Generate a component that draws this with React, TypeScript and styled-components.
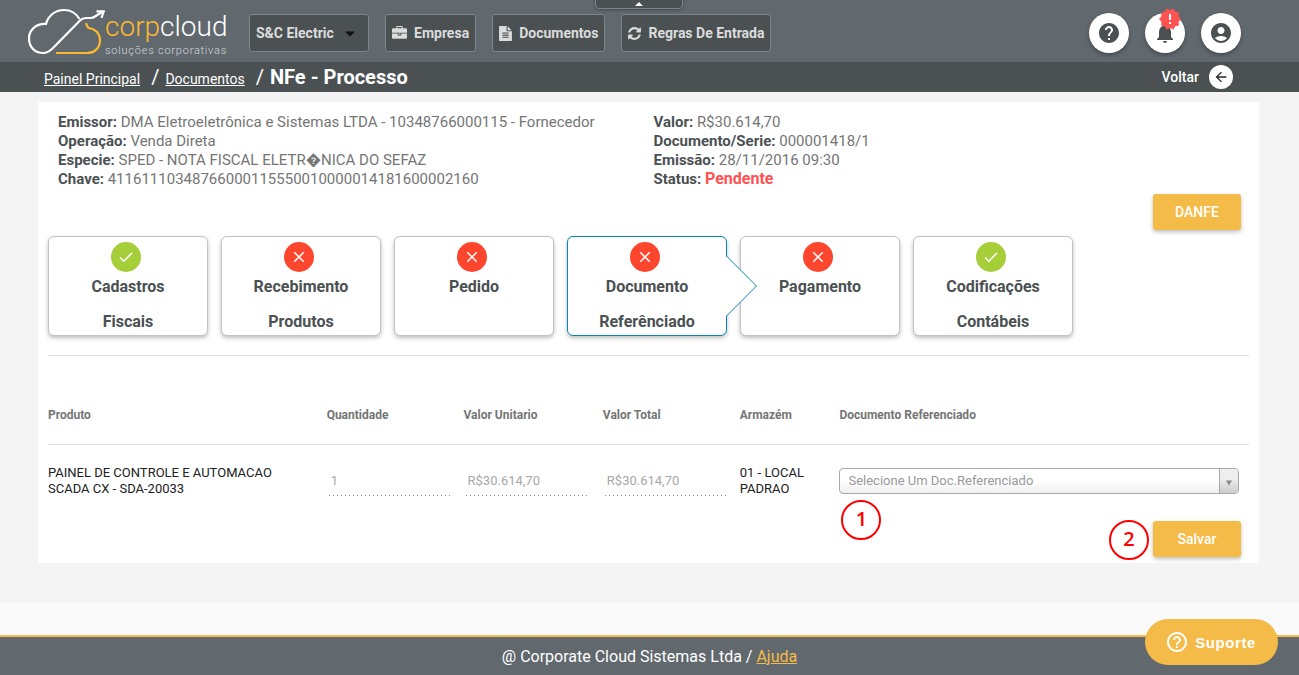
import React from "react";
import styled, { createGlobalStyle } from "styled-components";
import {
  MdAccountCircle,
  MdArrowBack,
  MdCheck,
  MdClose,
  MdHelp,
  MdHelpOutline,
  MdNewReleases,
  MdNotifications,
} from "react-icons/md";

const colors = {
  slate: "#61686e",
  dark: "#4b5153",
  amber: "#f4bb48",
  logo: "#fdb92f",
  text: "#757575",
  strong: "#4b5153",
  ok: "#a6ce39",
  error: "#fc462e",
  active: "#0a84b5",
};

const GlobalStyle = createGlobalStyle`
  *, *::before, *::after { box-sizing: border-box; }
  body {
    margin: 0;
    background: #fafafa;
    font-family: Roboto, "DejaVu Sans", sans-serif;
    font-size: 15px;
    color: ${colors.text};
  }
  button, select, input { font-family: inherit; }
`;

const Header = styled.header`
  position: relative;
  display: flex;
  align-items: center;
  height: 62px;
  padding: 4px 58px 0 28px;
  background: ${colors.slate};
`;

const Logo = styled.a`
  display: flex;
  align-items: flex-start;
  width: 221px;
  height: 50px;
  color: #fff;
  text-decoration: none;
`;

const LogoText = styled.span`
  display: flex;
  flex-direction: column;
  font-weight: 300;
  white-space: nowrap;
`;

const LogoName = styled.span`
  font-size: 28px;
  line-height: 38px;
  em {
    font-style: normal;
    color: ${colors.logo};
  }
`;

const LogoTag = styled.span`
  font-size: 11px;
  line-height: 10px;
  letter-spacing: 0.07em;
  color: #d5d8da;
`;

const Menu = styled.nav`
  display: flex;
  flex: 1;
  gap: 16px;
`;

const MenuButton = styled.button`
  display: flex;
  align-items: center;
  gap: 7px;
  height: 38px;
  padding: 0 6px;
  border: 1px solid #7f868b;
  border-radius: 3px;
  background: ${colors.dark};
  color: #dcdcdc;
  font-size: 14px;
  font-weight: 700;
  white-space: nowrap;
`;

const CompanyPicker = styled.div`
  position: relative;
  width: 120px;
`;

const CompanySelect = styled.select`
  appearance: none;
  width: 100%;
  height: 38px;
  padding: 0 6px;
  border: 1px solid #7f868b;
  border-radius: 3px;
  background: ${colors.dark};
  color: #dcdcdc;
  font-size: 14px;
  font-weight: 700;
`;

const Caret = styled.svg`
  position: absolute;
  right: 14px;
  top: 17px;
  pointer-events: none;
`;

const CollapseTab = styled.button`
  position: absolute;
  top: -4px;
  left: calc(50% - 55px);
  display: flex;
  align-items: flex-end;
  justify-content: center;
  width: 88px;
  height: 13px;
  padding: 0 0 2px;
  border: 1px solid #7f868b;
  border-radius: 4px;
  background: ${colors.dark};
  box-shadow: 0 1px 3px rgba(0, 0, 0, 0.3);
`;

const Actions = styled.div`
  display: flex;
  gap: 16px;
`;

const RoundButton = styled.button`
  position: relative;
  display: grid;
  place-items: center;
  width: 40px;
  height: 40px;
  padding: 0;
  border: 0;
  border-radius: 50%;
  background: #fff;
  color: ${colors.dark};
  box-shadow: 0 2px 4px rgba(0, 0, 0, 0.3);
`;

const Alert = styled.span`
  position: absolute;
  top: -6px;
  left: 13px;
  display: flex;
  color: #ff5252;
  background: radial-gradient(circle, #fff 7px, transparent 8px);
`;

const Crumbs = styled.div`
  display: flex;
  align-items: center;
  justify-content: space-between;
  height: 30px;
  padding: 0 66px 0 44px;
  background: ${colors.dark};
  color: #fff;
`;

const Trail = styled.nav`
  display: flex;
  align-items: baseline;
  font-size: 20px;
  a {
    color: #fff;
    font-size: 14px;
  }
  span {
    margin: 0 6px 0 11px;
  }
`;

const PageTitle = styled.h1`
  margin: 0;
  font-size: 20px;
  font-weight: 700;
`;

const BackLink = styled.a`
  display: flex;
  align-items: center;
  gap: 10px;
  color: #fff;
  font-size: 14px;
  font-weight: 500;
  text-decoration: none;
`;

const BackIcon = styled.span`
  display: grid;
  place-items: center;
  width: 24px;
  height: 24px;
  border-radius: 50%;
  background: #fff;
  color: #222;
`;

const Main = styled.main`
  padding: 10px 40px 40px 38px;
  background: #f4f4f4;
`;

const Card = styled.section`
  padding: 11px 10px 6px;
  background: #fff;
`;

const Info = styled.div`
  display: grid;
  grid-template-columns: 1fr 1fr;
  padding-left: 10px;
  line-height: 19px;
  p {
    margin: 0;
  }
  b {
    color: ${colors.strong};
  }
`;

const Status = styled.strong`
  font-size: 16px;
  line-height: 16px;
  color: #ff5252;
`;

const ButtonRow = styled.div<{ $top: number; $bottom: number }>`
  display: flex;
  justify-content: flex-end;
  padding: ${(p) => p.$top}px 8px ${(p) => p.$bottom}px;
`;

const ButtonHolder = styled.div`
  position: relative;
`;

const PrimaryButton = styled.button`
  width: 88px;
  height: 36px;
  padding: 0;
  border: 0;
  border-radius: 3px;
  background: ${colors.amber};
  color: #fff;
  font-size: 14px;
  font-weight: 500;
  box-shadow: 0 2px 4px rgba(0, 0, 0, 0.26);
`;

const Steps = styled.div`
  display: flex;
  gap: 13px;
  padding-bottom: 19px;
  border-bottom: 1px solid #e0e0e0;
`;

const StepCard = styled.button<{ $active?: boolean }>`
  position: relative;
  display: flex;
  flex-direction: column;
  align-items: center;
  justify-content: flex-start;
  width: 160px;
  height: 100px;
  padding: 5px 0 0;
  border: 1px solid ${(p) => (p.$active ? colors.active : "#c3c3c3")};
  border-radius: 6px;
  background: #fff;
  color: ${colors.strong};
  font-size: 16px;
  font-weight: 700;
  line-height: 35px;
  box-shadow: 0 2px 4px rgba(0, 0, 0, 0.26);
  z-index: ${(p) => (p.$active ? 1 : 0)};
`;

const StepBadge = styled.span<{ $ok: boolean }>`
  display: grid;
  flex-shrink: 0;
  place-items: center;
  width: 30px;
  height: 30px;
  margin: 0 4px -3px 0;
  border-radius: 50%;
  background: ${(p) => (p.$ok ? colors.ok : colors.error)};
  color: #fff;
`;

const Pointer = styled.svg`
  position: absolute;
  left: 157px;
  top: 18px;
`;

const Table = styled.table`
  width: 100%;
  margin-top: 31px;
  border-collapse: collapse;
  table-layout: fixed;
  th {
    height: 57px;
    padding: 0;
    font-size: 12px;
    font-weight: 700;
    text-align: left;
  }
  thead tr {
    border-bottom: 1px solid #e0e0e0;
  }
  td {
    position: relative;
    height: 73px;
    padding: 0;
    color: #212121;
    font-size: 13px;
    line-height: 16px;
  }
`;

const Col = styled.col<{ $w: string }>`
  width: ${(p) => p.$w};
`;

const DottedInput = styled.input`
  display: block;
  width: calc(100% - 15px);
  height: 30px;
  margin: 0 2px;
  padding: 2px;
  border: 0;
  background: repeating-linear-gradient(90deg, #8c8c8c 0 1px, transparent 1px 4px) bottom / 100% 1px no-repeat;
  color: #a8a8a8;
  font-size: 13px;
`;

const ReferenceBox = styled.div`
  position: relative;
  width: calc(100% - 10px);
`;

const ReferenceSelect = styled.select`
  appearance: none;
  display: block;
  width: 100%;
  height: 26px;
  padding: 0 26px 0 8px;
  border: 1px solid #aaa;
  border-radius: 4px;
  background: linear-gradient(#fff 50%, #eee);
  color: #999;
  font-size: 13px;
`;

const ReferenceArrow = styled.span`
  position: absolute;
  top: 1px;
  right: 1px;
  display: grid;
  place-items: center;
  width: 19px;
  height: 24px;
  padding-top: 4px;
  border-left: 1px solid #aaa;
  border-radius: 0 3px 3px 0;
  background: linear-gradient(#eee 40%, #ccc);
  pointer-events: none;
`;

const Marker = styled.span<{ $x: number; $y: number }>`
  position: absolute;
  left: ${(p) => p.$x}px;
  top: ${(p) => p.$y}px;
  width: 40px;
  height: 40px;
  border: 2px solid #f00;
  border-radius: 50%;
  color: #f00;
  font-family: "Open Sans", sans-serif;
  font-size: 20px;
  font-weight: 600;
  line-height: 34px;
  text-align: center;
`;

const Footer = styled.footer`
  margin-top: 32px;
  padding-top: 2px;
  border-top: 2px solid ${colors.amber};
  background: ${colors.slate};
  color: #fff;
  font-size: 16px;
  line-height: 36px;
  text-align: center;
  a {
    color: ${colors.amber};
  }
`;

const Support = styled.button`
  position: fixed;
  right: 21px;
  bottom: 10px;
  display: flex;
  align-items: center;
  gap: 6px;
  height: 46px;
  padding: 0 22px 0 20px;
  border: 0;
  border-radius: 23px;
  background: ${colors.amber};
  color: #fff;
  && {
    font-family: "Liberation Sans", sans-serif;
  }
  font-size: 15px;
  font-weight: 700;
  letter-spacing: 0.04em;
`;

const BRIEFCASE =
  "M640 256h512v-128h-512v128zm1152 640v480q0 66-47 113t-113 47h-1472q-66 0-113-47t-47-113v-480h672v160q0 26 19 45t45 19h320q26 0 45-19t19-45v-160h672zm-768 0v128h-256v-128h256zm768-480v384h-1792v-384q0-66 47-113t113-47h352v-160q0-40 28-68t68-28h576q40 0 68 28t28 68v160h352q66 0 113 47t47 113z";
const FILE =
  "M1596 476q14 14 28 36h-472v-472q22 14 36 28zm-476 164h544v1056q0 40-28 68t-68 28h-1344q-40 0-68-28t-28-68v-1600q0-40 28-68t68-28h800v544q0 40 28 68t68 28zm160 736v-64q0-14-9-23t-23-9h-704q-14 0-23 9t-9 23v64q0 14 9 23t23 9h704q14 0 23-9t9-23zm0-256v-64q0-14-9-23t-23-9h-704q-14 0-23 9t-9 23v64q0 14 9 23t23 9h704q14 0 23-9t9-23zm0-256v-64q0-14-9-23t-23-9h-704q-14 0-23 9t-9 23v64q0 14 9 23t23 9h704q14 0 23-9t9-23z";
const REFRESH =
  "M1639 1056q0 5-1 7-64 268-268 434.5t-478 166.5q-146 0-282.5-55t-243.5-157l-129 129q-19 19-45 19t-45-19-19-45v-448q0-26 19-45t45-19h448q26 0 45 19t19 45-19 45l-137 137q71 66 161 102t187 36q134 0 250-65t186-179q11-17 53-117 8-23 30-23h192q13 0 22.5 9.5t9.5 22.5zm25-800v448q0 26-19 45t-45 19h-448q-26 0-45-19t-19-45 19-45l138-138q-148-137-349-137-134 0-250 65t-186 179q-11 17-53 117-8 23-30 23h-199q-13 0-22.5-9.5t-9.5-22.5v-7q65-268 270-434.5t480-166.5q146 0 284 55.5t245 156.5l130-129q19-19 45-19t45 19 19 45z";

const MENU = [
  { label: "Empresa", path: BRIEFCASE, box: "0 0 1792 1792", width: 15 },
  { label: "Documentos", path: FILE, box: "128 0 1536 1792", width: 13 },
  { label: "Regras De Entrada", path: REFRESH, box: "128 0 1536 1792", width: 13 },
];

const STEPS = [
  { lines: ["Cadastros", "Fiscais"], ok: true },
  { lines: ["Recebimento", "Produtos"], ok: false },
  { lines: ["Pedido"], ok: false },
  { lines: ["Documento", "Referênciado"], ok: false, active: true },
  { lines: ["Pagamento"], ok: false },
  { lines: ["Codificações", "Contábeis"], ok: true },
];

export default function App() {
  return (
    <>
      <GlobalStyle />
      <Header>
        <Logo href="#inicio">
          <svg width="77" height="48" viewBox="28 8 77 48" fill="none" strokeWidth="2.2">
            <path
              stroke="#fff"
              d="M79.5 19C76 13 70.5 10 64 10C55 10 48 16 46 24C36 23.500 29 30 29 38.500C29 47 35 53 43 53C47 53 50 51 52.500 48.500L80 20.500Q82.500 18 86 18H90Q93 18 95 16.500L102 12"
            />
            <path stroke="#fff" d="M96.500 11.300L103.700 11.300L101.500 17.800" />
            <path
              stroke={colors.logo}
              d="M56 53H87C95 53 100 47.500 100 40.500C100 33.500 95 28.500 88.500 28C87.500 27 86.500 25.500 86 23"
            />
          </svg>
          <LogoText>
            <LogoName>
              <em>corp</em>cloud
            </LogoName>
            <LogoTag>soluções corporativas</LogoTag>
          </LogoText>
        </Logo>
        <Menu aria-label="Menu principal">
          <CompanyPicker>
            <CompanySelect aria-label="Empresa atual" defaultValue="sc">
              <option value="sc">S&amp;C Electric</option>
            </CompanySelect>
            <Caret width="10" height="6" viewBox="0 0 10 6" aria-hidden="true">
              <path d="M0 0.500H10L5 5.500Z" fill="#111" />
            </Caret>
          </CompanyPicker>
          {MENU.map((item) => (
            <MenuButton key={item.label} type="button">
              <svg width={item.width} height="15" viewBox={item.box} aria-hidden="true">
                <path d={item.path} fill="currentColor" />
              </svg>
              {item.label}
            </MenuButton>
          ))}
        </Menu>
        <Actions>
          <RoundButton type="button" aria-label="Dúvidas">
            <MdHelp size={24} />
          </RoundButton>
          <RoundButton type="button" aria-label="Notificações">
            <MdNotifications size={24} />
            <Alert>
              <MdNewReleases size={24} />
            </Alert>
          </RoundButton>
          <RoundButton type="button" aria-label="Conta">
            <MdAccountCircle size={24} />
          </RoundButton>
        </Actions>
        <CollapseTab type="button" aria-label="Recolher">
          <svg width="8" height="4" viewBox="0 0 8 4">
            <path d="M0 4L4 0L8 4Z" fill="#fff" />
          </svg>
        </CollapseTab>
      </Header>

      <Crumbs>
        <Trail aria-label="Trilha">
          <a href="#painel">Painel Principal</a>
          <span>/</span>
          <a href="#documentos">Documentos</a>
          <span>/</span>
          <PageTitle>NFe - Processo</PageTitle>
        </Trail>
        <BackLink href="#voltar">
          Voltar
          <BackIcon>
            <MdArrowBack size={16} />
          </BackIcon>
        </BackLink>
      </Crumbs>

      <Main>
        <Card>
          <Info>
            <div>
              <p><b>Emissor:</b> DMA Eletroeletrônica e Sistemas LTDA - 10348766000115 - Fornecedor</p>
              <p><b>Operação:</b> Venda Direta</p>
              <p><b>Especie:</b> SPED - NOTA FISCAL ELETR{"\uFFFD"}NICA DO SEFAZ</p>
              <p><b>Chave:</b> 41161110348766000115550010000014181600002160</p>
            </div>
            <div>
              <p><b>Valor:</b> R$30.614,70</p>
              <p><b>Documento/Serie:</b> 000001418/1</p>
              <p><b>Emissão:</b> 28/11/2016 09:30</p>
              <p><b>Status:</b> <Status>Pendente</Status></p>
            </div>
          </Info>
          <ButtonRow $top={5} $bottom={6}>
            <PrimaryButton type="button">DANFE</PrimaryButton>
          </ButtonRow>
          <Steps>
            {STEPS.map((step) => (
              <StepCard key={step.lines[0]} type="button" $active={step.active}>
                <StepBadge $ok={step.ok}>
                  {step.ok ? <MdCheck size={18} /> : <MdClose size={18} />}
                </StepBadge>
                {step.lines.map((line) => (
                  <span key={line}>{line}</span>
                ))}
                {step.active && (
                  <Pointer width="33" height="62" viewBox="0 0 33 62" aria-hidden="true">
                    <path d="M0 1H1.500L31.500 31L1.500 61H0Z" fill="#fff" />
                    <path d="M1.500 1L31.500 31L1.500 61" fill="none" stroke={colors.active} />
                  </Pointer>
                )}
              </StepCard>
            ))}
          </Steps>

          <Table>
            <colgroup>
              <Col $w="23.2%" />
              <Col $w="11.4%" />
              <Col $w="11.6%" />
              <Col $w="11.4%" />
              <Col $w="8.3%" />
              <Col $w="34.1%" />
            </colgroup>
            <thead>
              <tr>
                <th>Produto</th>
                <th>Quantidade</th>
                <th>Valor Unitario</th>
                <th>Valor Total</th>
                <th>Armazém</th>
                <th>Documento Referenciado</th>
              </tr>
            </thead>
            <tbody>
              <tr>
                <td>PAINEL DE CONTROLE E AUTOMACAO<br />SCADA CX - SDA-20033</td>
                <td><DottedInput aria-label="Quantidade" defaultValue="1" /></td>
                <td><DottedInput aria-label="Valor Unitario" defaultValue="R$30.614,70" /></td>
                <td><DottedInput aria-label="Valor Total" defaultValue="R$30.614,70" /></td>
                <td>01 - LOCAL<br />PADRAO</td>
                <td>
                  <ReferenceBox>
                    <ReferenceSelect aria-label="Documento Referenciado" defaultValue="">
                      <option value="">Selecione Um Doc.Referenciado</option>
                    </ReferenceSelect>
                    <ReferenceArrow>
                      <svg width="6" height="6" viewBox="0 0 6 6">
                        <path d="M0 0.500H6L3 5.500Z" fill="#888" />
                      </svg>
                    </ReferenceArrow>
                    <Marker $x={2} $y={32}>1</Marker>
                  </ReferenceBox>
                </td>
              </tr>
            </tbody>
          </Table>
          <ButtonRow $top={4} $bottom={0}>
            <ButtonHolder>
              <Marker $x={-44} $y={-1}>2</Marker>
              <PrimaryButton type="button">Salvar</PrimaryButton>
            </ButtonHolder>
          </ButtonRow>
        </Card>
      </Main>

      <Footer>
        @ Corporate Cloud Sistemas Ltda / <a href="#ajuda">Ajuda</a>
      </Footer>
      <Support type="button">
        <MdHelpOutline size={24} />
        Suporte
      </Support>
    </>
  );
}
